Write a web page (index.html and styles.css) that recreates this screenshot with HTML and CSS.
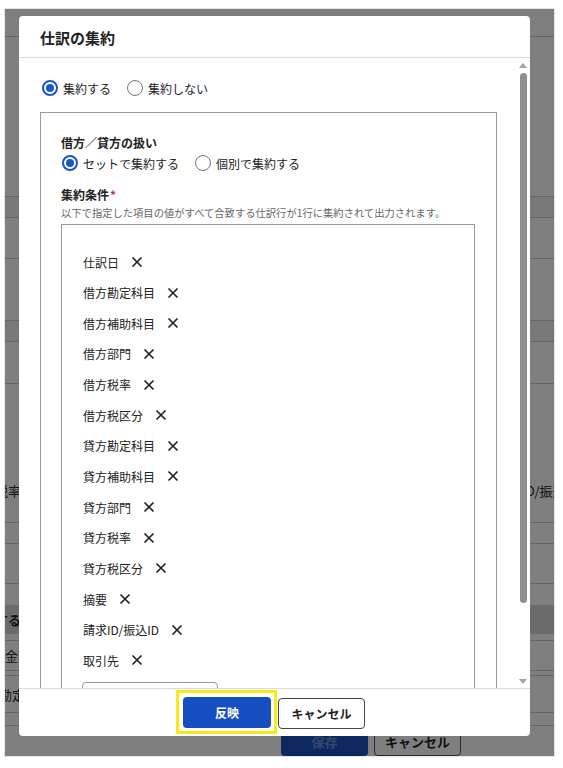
FILE: index.html
```html
<!DOCTYPE html>
<html lang="ja">
<head>
<meta charset="utf-8">
<title>仕訳の集約</title>
<link rel="stylesheet" href="styles.css">
</head>
<body>
<div class="frame">
  <div class="page">
    <div class="bg-row r28 line"></div>
    <div class="bg-row r160 line"></div>
    <div class="bg-row r21 band line"></div>
    <div class="bg-row r41 line"></div>
    <div class="bg-row r62 line"></div>
    <div class="bg-row r21 band line"></div>
    <div class="bg-row r42 line"></div>
    <div class="bg-row r139 line split">
      <span class="bg-text cut-left w16">税率</span>
      <span class="bg-text cut-right"><span class="cut-right-inner">ID/振込ID</span></span>
    </div>
    <div class="bg-row r21 line"></div>
    <div class="bg-row r40 line"></div>
    <div class="bg-row r21"></div>
    <div class="bg-row r29 dark"><span class="bg-text bold cut-left w16">する</span></div>
    <div class="bg-row r7 line"></div>
    <div class="bg-row r30 line"><span class="bg-text">金額</span></div>
    <div class="bg-row r5 line"></div>
    <div class="bg-row r37 line"><span class="bg-text cut-left w20">勘定</span></div>
    <div class="bg-row r13 line"></div>
    <div class="bg-row r30 bg-actions">
      <span class="bg-btn bg-btn-primary">保存</span>
      <span class="bg-btn bg-btn-secondary">キャンセル</span>
    </div>
  </div>
  <div class="overlay"></div>

  <div class="modal">
    <div class="modal-header">
      <h2 class="modal-title">仕訳の集約</h2>
    </div>
    <div class="modal-body">
      <div class="modal-content">
        <div class="radio-row top-radios">
          <label class="radio"><span class="radio-mark checked"></span>集約する</label>
          <label class="radio"><span class="radio-mark"></span>集約しない</label>
        </div>
        <div class="section-box">
          <div class="field-label">借方／貸方の扱い</div>
          <div class="radio-row inner-radios">
            <label class="radio"><span class="radio-mark checked"></span>セットで集約する</label>
            <label class="radio"><span class="radio-mark"></span>個別で集約する</label>
          </div>
          <div class="field-label cond-label">集約条件<span class="req">*</span></div>
          <div class="field-help">以下で指定した項目の値がすべて合致する仕訳行が1行に集約されて出力されます。</div>
          <div class="cond-box">
            <ul class="cond-list">
              <li class="cond-item">仕訳日<svg class="x-icon" viewBox="0 0 12 12"><path d="M1.5 1.5L10.5 10.5M10.5 1.5L1.5 10.5"/></svg></li>
              <li class="cond-item">借方勘定科目<svg class="x-icon" viewBox="0 0 12 12"><path d="M1.5 1.5L10.5 10.5M10.5 1.5L1.5 10.5"/></svg></li>
              <li class="cond-item">借方補助科目<svg class="x-icon" viewBox="0 0 12 12"><path d="M1.5 1.5L10.5 10.5M10.5 1.5L1.5 10.5"/></svg></li>
              <li class="cond-item">借方部門<svg class="x-icon" viewBox="0 0 12 12"><path d="M1.5 1.5L10.5 10.5M10.5 1.5L1.5 10.5"/></svg></li>
              <li class="cond-item">借方税率<svg class="x-icon" viewBox="0 0 12 12"><path d="M1.5 1.5L10.5 10.5M10.5 1.5L1.5 10.5"/></svg></li>
              <li class="cond-item">借方税区分<svg class="x-icon" viewBox="0 0 12 12"><path d="M1.5 1.5L10.5 10.5M10.5 1.5L1.5 10.5"/></svg></li>
              <li class="cond-item">貸方勘定科目<svg class="x-icon" viewBox="0 0 12 12"><path d="M1.5 1.5L10.5 10.5M10.5 1.5L1.5 10.5"/></svg></li>
              <li class="cond-item">貸方補助科目<svg class="x-icon" viewBox="0 0 12 12"><path d="M1.5 1.5L10.5 10.5M10.5 1.5L1.5 10.5"/></svg></li>
              <li class="cond-item">貸方部門<svg class="x-icon" viewBox="0 0 12 12"><path d="M1.5 1.5L10.5 10.5M10.5 1.5L1.5 10.5"/></svg></li>
              <li class="cond-item">貸方税率<svg class="x-icon" viewBox="0 0 12 12"><path d="M1.5 1.5L10.5 10.5M10.5 1.5L1.5 10.5"/></svg></li>
              <li class="cond-item">貸方税区分<svg class="x-icon" viewBox="0 0 12 12"><path d="M1.5 1.5L10.5 10.5M10.5 1.5L1.5 10.5"/></svg></li>
              <li class="cond-item">摘要<svg class="x-icon" viewBox="0 0 12 12"><path d="M1.5 1.5L10.5 10.5M10.5 1.5L1.5 10.5"/></svg></li>
              <li class="cond-item">請求ID/振込ID<svg class="x-icon" viewBox="0 0 12 12"><path d="M1.5 1.5L10.5 10.5M10.5 1.5L1.5 10.5"/></svg></li>
              <li class="cond-item">取引先<svg class="x-icon" viewBox="0 0 12 12"><path d="M1.5 1.5L10.5 10.5M10.5 1.5L1.5 10.5"/></svg></li>
            </ul>
            <div class="cond-input"></div>
          </div>
        </div>
      </div>
      <div class="scrollbar">
        <span class="sb-arrow sb-up"></span>
        <span class="sb-thumb"></span>
        <span class="sb-space"></span>
        <span class="sb-arrow sb-down"></span>
      </div>
    </div>
    <div class="modal-footer">
      <span class="focus-ring"><button class="btn btn-primary">反映</button></span>
      <button class="btn btn-secondary">キャンセル</button>
    </div>
  </div>
</div>
</body>
</html>
```
FILE: styles.css
```css
* { box-sizing: border-box; }
html, body { margin: 0; padding: 0; background: #fff; }
body {
  font-family: "Noto Sans CJK JP", "Noto Sans", sans-serif;
  color: #222;
}
.frame {
  position: relative;
  margin: 8px 0 0 4px;
  width: 551px;
  height: 749px;
  border: 1px solid #e4e4e4;
  overflow: hidden;
}
.page {
  display: flex;
  flex-direction: column;
  background: #fff;
  height: 747px;
}
.bg-row { flex: none; display: flex; align-items: center; font-size: 13px; color: #222; }
.bg-row.line { border-bottom: 1px solid #c8c8c8; }
.bg-row.band { background: #f0f0f0; }
.bg-row.dark { background: #d6d6d6; }
.r5 { height: 5px; } .r7 { height: 7px; } .r13 { height: 13px; }
.r21 { height: 21px; } .r28 { height: 28px; } .r29 { height: 29px; }
.r30 { height: 30px; } .r37 { height: 37px; } .r40 { height: 40px; }
.r41 { height: 41px; } .r42 { height: 42px; } .r62 { height: 62px; }
.r139 { height: 139px; } .r160 { height: 160px; }
.split { justify-content: space-between; align-items: flex-start; padding-top: 97px; }
.bg-text { white-space: nowrap; }
.bg-text.bold { font-weight: 700; }
.cut-left { display: flex; justify-content: flex-end; overflow: hidden; }
.w16 { width: 16px; }
.w20 { width: 20px; }
.cut-right { display: flex; width: 28px; overflow: hidden; }
.cut-right-inner { margin-left: -4px; }
.bg-actions { align-items: flex-end; padding-left: 276px; gap: 6px; }
.bg-btn {
  width: 87px; height: 30px; border-radius: 4px;
  display: flex; align-items: center; justify-content: center;
  font-size: 13px; font-weight: 700;
}
.bg-btn-primary { background: #1a4fbf; color: #6d8fd8; }
.bg-btn-secondary { background: #fff; border: 1px solid #555; color: #222; }

.overlay { position: absolute; inset: 0; background: rgba(0, 0, 0, 0.5); }

.modal {
  position: absolute;
  left: 14px;
  top: 7px;
  width: 511px;
  height: 720px;
  background: #fff;
  border-radius: 4px;
  display: flex;
  flex-direction: column;
  overflow: hidden;
}
.modal-header {
  flex: none;
  height: 42px;
  border-bottom: 1px solid #dcdcdc;
  display: flex;
  align-items: center;
  padding: 2px 0 0 21px;
}
.modal-title { margin: 0; font-size: 15px; font-weight: 700; color: #222; }

.modal-body { flex: 1; display: flex; min-height: 0; }
.modal-content { flex: 1; overflow: hidden; padding: 20px 0 0 21px; font-size: 12px; }

.radio-row { display: flex; align-items: center; height: 20px; gap: 16px; }
.top-radios { padding-left: 2px; }
.inner-radios { padding-left: 1px; }
.radio { display: inline-flex; align-items: center; gap: 5px; font-size: 12px; color: #222; }
.radio-mark {
  width: 16px; height: 16px; border-radius: 50%;
  border: 1.5px solid #767676; background: #fff;
  display: inline-flex; align-items: center; justify-content: center;
}
.radio-mark.checked { border: 2px solid #1a56c8; }
.radio-mark.checked::after {
  content: ""; width: 8px; height: 8px; border-radius: 50%; background: #1a56c8;
}

.section-box {
  margin-top: 14px;
  width: 457px;
  height: 700px;
  border: 1px solid #9a9a9a;
  padding: 20px 21px 0 20px;
}
.field-label { font-size: 12px; font-weight: 700; line-height: 20px; color: #222; }
.cond-label { margin-top: 12px; }
.req { color: #d0312d; margin-left: 1px; }
.field-help { font-size: 10.3px; line-height: 16px; color: #666; white-space: nowrap; }

.cond-box {
  margin-top: 3px;
  width: 414px;
  height: 600px;
  border: 1px solid #9a9a9a;
  padding: 27px 0 0 21px;
}
.cond-list { list-style: none; margin: 0; padding: 0; display: flex; flex-direction: column; gap: 10.65px; }
.cond-item { height: 20px; display: flex; align-items: center; font-size: 12px; color: #222; }
.x-icon { width: 12px; height: 12px; margin-left: 12px; fill: none; stroke: #222; stroke-width: 1.7; }
.cond-input {
  margin-top: 12px; margin-left: -1px;
  width: 136px; height: 30px;
  border: 1px solid #9a9a9a; border-radius: 4px;
}

.scrollbar {
  flex: none; width: 15px;
  display: flex; flex-direction: column; align-items: center;
  padding: 5px 0 4px;
}
.sb-arrow { width: 0; height: 0; border-left: 4px solid transparent; border-right: 4px solid transparent; }
.sb-up { border-bottom: 5px solid #a3a3a3; }
.sb-down { border-top: 5px solid #a3a3a3; }
.sb-thumb { margin-top: 5px; width: 7px; height: 530px; border-radius: 4px; background: #8f8f8f; margin-left: 1px; }
.sb-space { flex: 1; }

.modal-footer {
  flex: none;
  height: 48px;
  border-top: 1px solid #dcdcdc;
  display: flex;
  justify-content: center;
  align-items: flex-start;
  gap: 1px;
  padding-top: 1px;
}
.focus-ring {
  display: flex;
  margin-left: -8px;
  border: 3px solid #ffe81a;
  padding: 4px 3px 3px 4px;
}
.btn {
  height: 31px;
  border-radius: 4px;
  font-family: "Noto Sans CJK JP", "Noto Sans", sans-serif;
  font-size: 12px;
  font-weight: 700;
  padding: 0;
  cursor: pointer;
}
.btn-primary {
  width: 88px;
  background: #164fc2;
  color: #fff;
  border: none;
}
.btn-secondary {
  margin-top: 8px;
  width: 87px;
  background: #fff;
  color: #222;
  border: 1px solid #444;
}
```
